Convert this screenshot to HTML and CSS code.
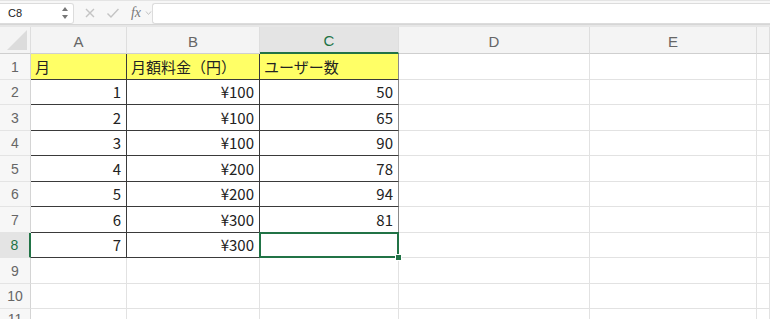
FILE: index.html
```html
<!DOCTYPE html>
<html lang="ja">
<head>
    <meta charset="UTF-8">
    <meta name="viewport" content="width=device-width, initial-scale=1.0">
    <title>Sheet</title>
    <link rel="stylesheet" href="styles.css">
</head>
<body>
    <!-- formula bar -->
    <div class="formula-bar">
        <div class="name-box">
            <span>C8</span>
            <svg class="spin" width="8" height="14" viewBox="0 0 8 14">
                <path d="M4 1 L7 5 L1 5 Z" fill="#777"/>
                <path d="M4 13 L7 9 L1 9 Z" fill="#777"/>
            </svg>
        </div>
        <div class="fx-tools">
            <svg width="12" height="12" viewBox="0 0 12 12"><path d="M2 2 L10 10 M10 2 L2 10" stroke="#c4c4c4" stroke-width="1.4" fill="none"/></svg>
            <svg width="14" height="12" viewBox="0 0 14 12"><path d="M1.5 6.5 L5 10 L12.5 2" stroke="#c4c4c4" stroke-width="1.4" fill="none"/></svg>
            <span class="fx">fx</span>
            <svg width="7" height="6" viewBox="0 0 7 6"><path d="M1 1.5 L3.5 4.5 L6 1.5" stroke="#c4c4c4" stroke-width="1" fill="none"/></svg>
        </div>
        <div class="formula-input"></div>
    </div>

    <div class="sheet">
        <div class="grid">
            <div class="hd corner"><span class="tri"></span></div>
            <div class="hd col">A</div>
            <div class="hd col">B</div>
            <div class="hd col active-col">C</div>
            <div class="hd col">D</div>
            <div class="hd col">E</div>
            <div class="hd col"></div>

            <div class="hd row">1</div>
            <div class="c hl t dk">月</div>
            <div class="c hl t dk">月額料金（円）</div>
            <div class="c hl t dc">ユーザー数</div>
            <div class="c"></div><div class="c"></div><div class="c"></div>

            <div class="hd row">2</div>
            <div class="c n dk">1</div><div class="c n dk">¥100</div><div class="c n dc">50</div>
            <div class="c"></div><div class="c"></div><div class="c"></div>

            <div class="hd row">3</div>
            <div class="c n dk">2</div><div class="c n dk">¥100</div><div class="c n dc">65</div>
            <div class="c"></div><div class="c"></div><div class="c"></div>

            <div class="hd row">4</div>
            <div class="c n dk">3</div><div class="c n dk">¥100</div><div class="c n dc">90</div>
            <div class="c"></div><div class="c"></div><div class="c"></div>

            <div class="hd row">5</div>
            <div class="c n dk">4</div><div class="c n dk">¥200</div><div class="c n dc">78</div>
            <div class="c"></div><div class="c"></div><div class="c"></div>

            <div class="hd row">6</div>
            <div class="c n dk">5</div><div class="c n dk">¥200</div><div class="c n dc">94</div>
            <div class="c"></div><div class="c"></div><div class="c"></div>

            <div class="hd row">7</div>
            <div class="c n dk">6</div><div class="c n dk">¥300</div><div class="c n dc">81</div>
            <div class="c"></div><div class="c"></div><div class="c"></div>

            <div class="hd row active-row">8</div>
            <div class="c n dk">7</div><div class="c n dk">¥300</div>
            <div class="c n dc selected"><span class="handle"></span></div>
            <div class="c"></div><div class="c"></div><div class="c"></div>

            <div class="hd row">9</div>
            <div class="c"></div><div class="c"></div><div class="c"></div>
            <div class="c"></div><div class="c"></div><div class="c"></div>

            <div class="hd row">10</div>
            <div class="c"></div><div class="c"></div><div class="c"></div>
            <div class="c"></div><div class="c"></div><div class="c"></div>

            <div class="hd row">11</div>
            <div class="c"></div><div class="c"></div><div class="c"></div>
            <div class="c"></div><div class="c"></div><div class="c"></div>
        </div>
    </div>
</body>
</html>
```

FILE: styles.css
```css
body {
    margin: 0;
    padding: 0;
    background-color: #fff;
    font-family: "Noto Sans CJK JP", "Noto Sans", sans-serif;
    overflow: hidden;
}

/* formula bar */
.formula-bar {
    display: flex;
    align-items: center;
    height: 22px;
    padding-top: 1px;
    background-color: #f7f7f7;
    border-top: 1px solid #e4e4e4;
    border-bottom: 1px solid #d6d6d6;
}

.name-box {
    display: flex;
    align-items: center;
    justify-content: space-between;
    width: 74px;
    height: 21px;
    box-sizing: border-box;
    padding: 0 4px 0 8px;
    background-color: #fff;
    border: 1px solid #dcdcdc;
    border-left: none;
    border-radius: 0 3px 3px 0;
    font-family: "Liberation Sans", Arial, sans-serif;
    font-size: 11px;
    color: #222;
}

.fx-tools {
    display: flex;
    align-items: center;
    width: 78px;
    padding-left: 10px;
    gap: 10px;
    box-sizing: border-box;
}

.fx-tools .fx {
    font-family: "Liberation Serif", serif;
    font-style: italic;
    font-size: 14px;
    color: #777;
    margin-left: 1px;
    margin-right: -6px;
}

.formula-input {
    flex: 1;
    height: 21px;
    box-sizing: border-box;
    background-color: #fff;
    border: 1px solid #dcdcdc;
    border-right: none;
    border-radius: 3px 0 0 3px;
}

.sheet {
    border-top: 2px solid #e6e6e6;
}

/* grid */
.grid {
    display: grid;
    grid-template-columns: 31px 96px 133px 139px 191px 167px 13px;
    grid-template-rows: 27px repeat(10, 25.5px) 20px;
}

.hd {
    box-sizing: border-box;
    background-color: #f4f4f4;
    color: #666;
    display: flex;
    align-items: center;
    justify-content: center;
    font-family: "Liberation Sans", Arial, sans-serif;
    font-weight: normal;
}

.col {
    font-size: 15px;
    border-right: 1px solid #dedede;
    border-bottom: 1px solid #cfcfcf;
    padding-top: 2px;
}

.row {
    font-size: 14px;
    background-color: #f7f7f7;
    border-right: 1px solid #d4d4d4;
    border-bottom: 1px solid #e4e4e4;
    padding-top: 1px;
}

.corner {
    border-right: 1px solid #dedede;
    border-bottom: 1px solid #cfcfcf;
    align-items: flex-end;
    justify-content: flex-end;
    padding: 0 3px 3px 0;
}

.tri {
    width: 0;
    height: 0;
    border-left: 20px solid transparent;
    border-bottom: 20px solid #dcdcdc;
}

.active-col {
    background-color: #e4e4e4;
    color: #217346;
    border-bottom: 2px solid #217346;
}

.active-row {
    background-color: #e4e4e4;
    color: #217346;
    border-right: 2px solid #217346;
}

.c {
    box-sizing: border-box;
    border-right: 1px solid #e2e2e2;
    border-bottom: 1px solid #e2e2e2;
    font-size: 15px;
    color: #222;
    display: flex;
    align-items: center;
    padding: 0 5px 0 4px;
    white-space: nowrap;
}

.n {
    justify-content: flex-end;
}

.hl {
    background-color: #ffff66;
}

.t {
    padding-top: 1px;
}

.dk {
    border-right-color: #3a3a3a;
    border-bottom-color: #3a3a3a;
}

.dc {
    border-right-color: #8a8a8a;
    border-bottom-color: #3a3a3a;
}

.selected {
    position: relative;
}

.selected::after {
    content: "";
    position: absolute;
    left: -1px;
    top: -1px;
    right: -1px;
    bottom: -1px;
    border: 2px solid #217346;
}

.handle {
    position: absolute;
    right: -4px;
    bottom: -4px;
    width: 5px;
    height: 5px;
    background-color: #217346;
    border: 1px solid #fff;
    z-index: 1;
}
```
